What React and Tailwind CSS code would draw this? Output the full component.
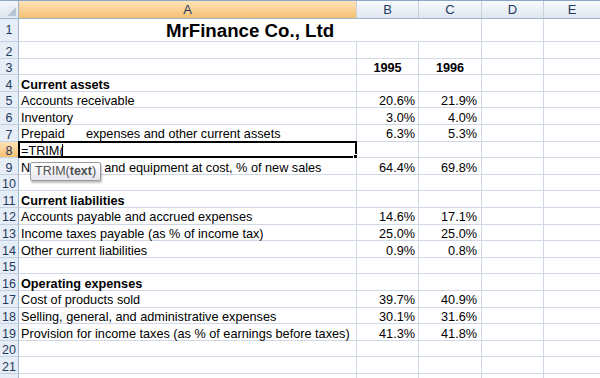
import React from "react";

const rows = [
  { n: 2 },
  { n: 3, b: "1995", c: "1996", year: true },
  { n: 4, a: "Current assets", bold: true },
  { n: 5, a: "Accounts receivable", b: "20.6%", c: "21.9%" },
  { n: 6, a: "Inventory", b: "3.0%", c: "4.0%" },
  { n: 7, a: "Prepaid      expenses and other current assets", b: "6.3%", c: "5.3%" },
  { n: 8, edit: true },
  { n: 9, a: "Net properties and equipment at cost, % of new sales", b: "64.4%", c: "69.8%" },
  { n: 10 },
  { n: 11, a: "Current liabilities", bold: true },
  { n: 12, a: "Accounts payable and accrued expenses", b: "14.6%", c: "17.1%" },
  { n: 13, a: "Income taxes payable (as % of income tax)", b: "25.0%", c: "25.0%" },
  { n: 14, a: "Other current liabilities", b: "0.9%", c: "0.8%" },
  { n: 15 },
  { n: 16, a: "Operating expenses", bold: true },
  { n: 17, a: "Cost of products sold", b: "39.7%", c: "40.9%" },
  { n: 18, a: "Selling, general, and administrative expenses", b: "30.1%", c: "31.6%" },
  { n: 19, a: "Provision for income taxes (as % of earnings before taxes)", b: "41.3%", c: "41.8%" },
  { n: 20 },
  { n: 21 },
  { n: 22, hideNum: true },
];

function RowHead({ n, selected, plain }) {
  return (
    <div
      className={
        "w-[19px] shrink-0 flex items-center justify-center border-r border-b border-r-[#9eb6ce] border-b-[#c5d1e0] text-[12.5px] leading-none " +
        (plain ? "" : "pt-[4px] ") +
        (selected
          ? "bg-gradient-to-b from-[#fde3b8] to-[#f4c06e] text-[#1f3a5f]"
          : "bg-[#e6edf6] text-[#1f3a5f]")
      }
    >
      {n}
    </div>
  );
}

function ColHead({ label, w, selected }) {
  return (
    <div
      className={
        w +
        " shrink-0 h-full flex items-center justify-center border-r border-r-[#c5d1e0] text-[13px] leading-none " +
        (selected
          ? "bg-gradient-to-b from-[#fde3b8] to-[#f4c06e] text-[#1f3a5f]"
          : "bg-gradient-to-b from-[#f9fbfd] to-[#dfe6ef] text-[#1f3a5f]")
      }
    >
      {label}
    </div>
  );
}

function Row({ r }) {
  return (
    <div className="flex h-[16.6px] shrink-0">
      <RowHead n={r.hideNum ? "" : r.n} selected={r.edit} />
      <div
        className={
          "w-[338px] shrink-0 relative flex items-center border-r border-b border-[#d0d7e5] pl-[2px] pt-[4px] whitespace-pre leading-none " +
          (r.bold ? "font-bold" : "")
        }
      >
        {r.edit ? (
          <>
            <div className="absolute -top-px -left-px right-[-1px] bottom-[-1px] border-2 border-black z-10">
              <div className="absolute right-[-3px] bottom-[-3px] w-[5px] h-[5px] bg-black border border-white"></div>
            </div>
            <span className="relative z-20">=TRIM(</span>
            <span className="relative z-20 inline-block w-px h-[13px] bg-black ml-[-2px] mt-[-2px]"></span>
            <div className="absolute top-[20px] left-[11px] z-30 h-[19px] px-[4px] flex items-center rounded-[2px] border border-[#9a9a9a] bg-gradient-to-b from-[#ffffff] to-[#e6e7ef] shadow-[1px_2px_2px_rgba(0,0,0,0.25)] text-[12.5px] text-[#505050] font-normal">
              TRIM(<span className="font-bold">text</span>)
            </div>
          </>
        ) : (
          r.a
        )}
      </div>
      <div
        className={
          "w-[62px] shrink-0 flex items-center border-r border-b border-[#d0d7e5] pt-[4px] leading-none " +
          (r.year ? "justify-center font-bold" : "justify-end pr-[3px]")
        }
      >
        {r.b}
      </div>
      <div
        className={
          "w-[63px] shrink-0 flex items-center border-r border-b border-[#d0d7e5] pt-[4px] leading-none " +
          (r.year ? "justify-center font-bold" : "justify-end pr-[4px]")
        }
      >
        {r.c}
      </div>
      <div className="w-[62px] shrink-0 border-r border-b border-[#d0d7e5]"></div>
      <div className="flex-1 border-b border-[#d0d7e5]"></div>
    </div>
  );
}

export default function App() {
  return (
    <div className="w-[600px] h-[378px] overflow-hidden bg-white flex flex-col font-['Liberation_Sans',Arial,sans-serif] text-[12.7px] text-black">
      {/* column header */}
      <div className="flex h-[19px] shrink-0 border-t border-t-[#8ea6c8] border-b border-b-[#9eb6ce]">
        <div className="w-[19px] shrink-0 h-full relative border-r border-r-[#9eb6ce] bg-gradient-to-b from-[#f3f6fa] to-[#dfe6ef]">
          <svg className="absolute right-[2px] bottom-[2px]" width="9" height="9" viewBox="0 0 9 9">
            <polygon points="9,0 9,9 0,9" fill="#b9c6d6" />
          </svg>
        </div>
        <ColHead label="A" w="w-[338px]" selected />
        <ColHead label="B" w="w-[62px]" />
        <ColHead label="C" w="w-[63px]" />
        <ColHead label="D" w="w-[62px]" />
        <div className="flex-1 h-full flex items-center justify-center text-[13px] leading-none bg-gradient-to-b from-[#f9fbfd] to-[#dfe6ef] text-[#1f3a5f]">
          E
        </div>
      </div>
      {/* row 1 */}
      <div className="flex h-[23px] shrink-0">
        <RowHead n={1} plain />
        <div className="w-[463px] shrink-0 flex items-center justify-center border-r border-b border-[#d0d7e5] font-bold text-[18.7px] leading-none pt-[2px]">
          MrFinance Co., Ltd
        </div>
        <div className="w-[62px] shrink-0 border-r border-b border-[#d0d7e5]"></div>
        <div className="flex-1 border-b border-[#d0d7e5]"></div>
      </div>
      {rows.map((r) => (
        <Row key={r.n} r={r} />
      ))}
    </div>
  );
}
